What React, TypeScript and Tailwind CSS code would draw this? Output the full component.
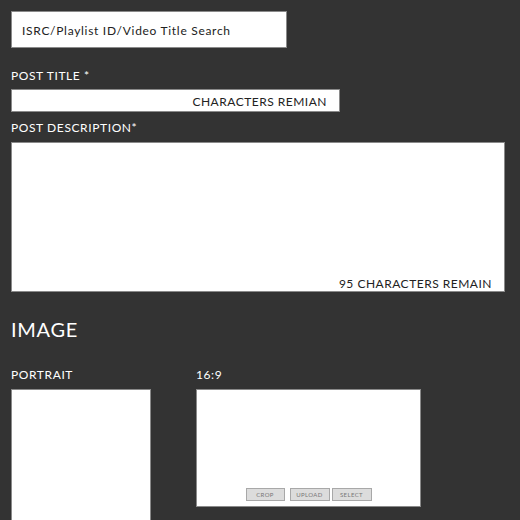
export default function App() {
    return (
        <div
            className="w-[520px] h-[520px] overflow-hidden bg-[#333333] pl-[11px] pt-[11px] text-white"
            style={{ fontFamily: 'Lato, "Open Sans", sans-serif' }}
        >
            <div className="flex h-[37px] w-[276px] items-center border border-[#8a8a8a] bg-white pl-[10px] pt-[2px] text-[12px] leading-[12px] tracking-[0.7px] text-[#222]">
                ISRC/Playlist ID/Video Title Search
            </div>

            <div className="mt-[22px] text-[12px] leading-[12px] tracking-[0.6px]">POST TITLE *</div>
            <div className="mt-[7px] flex h-[23px] w-[329px] items-center justify-end border border-[#8a8a8a] bg-white pr-[12px] pt-[2px] text-[12px] leading-[12px] tracking-[0.5px] text-[#222]">
                CHARACTERS REMIAN
            </div>

            <div className="mt-[10px] text-[12px] leading-[12px] tracking-[0.6px]">POST DESCRIPTION*</div>
            <div className="mt-[8px] flex h-[150px] w-[494px] flex-col items-end justify-end border border-[#8a8a8a] bg-white pb-[1px] pr-[12px] text-[12px] leading-[12px] tracking-[0.5px] text-[#222]">
                95 CHARACTERS REMAIN
            </div>

            <div className="mt-[27px] text-[20px] leading-[20px] tracking-[0.7px]">IMAGE</div>

            <div className="mt-[30px] flex gap-[45px]">
                <div>
                    <div className="text-[12px] leading-[12px] tracking-[0.6px]">PORTRAIT</div>
                    <div className="mt-[8px] h-[160px] w-[140px] border border-[#8a8a8a] bg-white" />
                </div>
                <div>
                    <div className="text-[12px] leading-[12px] tracking-[0.6px]">16:9</div>
                    <div className="mt-[8px] flex h-[118px] w-[225px] items-end justify-center border border-[#8a8a8a] bg-white pb-[5px]">
                        <button className="h-[13px] w-[39px] border border-[#a8a8a8] bg-[#dcdcdc] text-[6px] leading-[6px] tracking-[0.4px] text-[#777]">
                            CROP
                        </button>
                        <button className="ml-[5px] h-[13px] w-[40px] border border-[#a8a8a8] bg-[#dcdcdc] text-[6px] leading-[6px] tracking-[0.4px] text-[#777]">
                            UPLOAD
                        </button>
                        <button className="ml-[2px] h-[13px] w-[40px] border border-[#a8a8a8] bg-[#dcdcdc] text-[6px] leading-[6px] tracking-[0.4px] text-[#777]">
                            SELECT
                        </button>
                    </div>
                </div>
            </div>
        </div>
    );
}
